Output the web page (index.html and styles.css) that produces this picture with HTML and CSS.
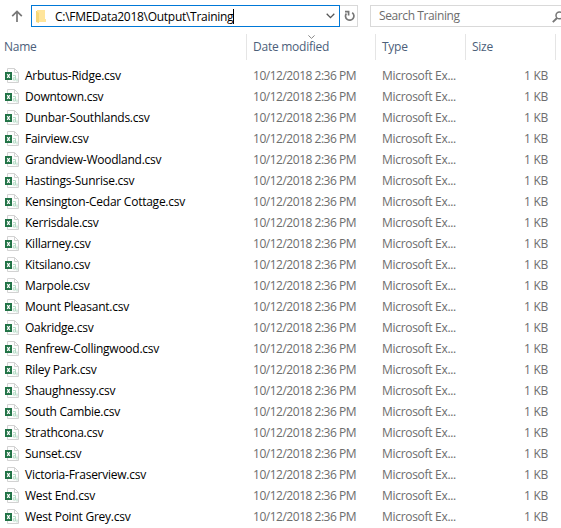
FILE: index.html
```html
<!DOCTYPE html>
<html lang="en">
<head>
<meta charset="utf-8">
<title>Training</title>
<link rel="stylesheet" href="styles.css">
</head>
<body>
<svg class="defs" aria-hidden="true">
  <symbol id="csv" viewBox="0 0 14 16">
    <path d="M2.5.5h7l4 4v10h-11z" fill="#fdfdfd" stroke="#d2d2d2"/>
    <path d="M9.5.5v4h4" fill="none" stroke="#d2d2d2"/>
    <path d="M8 7.5h2.5v4.5H8.3v-2.2h2.2M12 10.5v3" fill="none" stroke="#b5dcc6"/>
    <path d="M0 4h7v8H0z" fill="#217346"/>
    <path d="M2.2 6.2l2.6 3.6M4.8 6.2L2.2 9.8" fill="none" stroke="#fff" stroke-width="1.2"/>
  </symbol>
</svg>
<div class="toolbar">
  <svg class="up" viewBox="0 0 12 12"><path d="M6 12V1.5M1.2 6.2L6 1.4l4.8 4.8" fill="none" stroke="#777" stroke-width="1.7"/></svg>
  <div class="address">
    <svg class="folder" viewBox="0 0 10 13"><path d="M0 1h5v11H0z" fill="#f3cf69"/><path d="M1 0h8v9h1v3H1z" fill="#ffe59b"/><path d="M0 1l3 2v10l-3-1z" fill="#f7d778"/></svg>
    <span class="path">C:\FMEData2018\Output\Training</span><i class="caret"></i>
    <svg class="chevron" viewBox="0 0 9 6"><path d="M.7.8l3.8 3.8L8.3.8" fill="none" stroke="#555" stroke-width="1.3"/></svg>
  </div>
  <div class="refresh"><svg viewBox="0 0 11 12"><path d="M8.2 2.6A4.2 4.2 0 1 1 2.4 3.4M1 1.6h3.6v4" fill="none" stroke="#777" stroke-width="1.7"/></svg></div>
  <div class="search"><span>Search Training</span>
    <svg viewBox="0 0 12 12"><circle cx="7.4" cy="4.4" r="3.4" fill="none" stroke="#777" stroke-width="1.5"/><path d="M5 7L.8 11.2" stroke="#777" stroke-width="1.9"/></svg>
  </div>
</div>
<div class="head">
  <div class="h-name">Name</div>
  <div class="h-date">Date modified<svg class="sort" viewBox="0 0 7 4"><path d="M.4.4l3.1 3L6.6.4" fill="none" stroke="#888"/></svg></div>
  <div class="h-type">Type</div>
  <div class="h-size">Size</div>
</div>
<div class="list">
  <div class="row"><svg><use href="#csv"/></svg><b>Arbutus-Ridge.csv</b><span class="date">10/12/2018 2:36 PM</span><span class="type">Microsoft Ex...</span><span class="size">1 KB</span></div>
  <div class="row"><svg><use href="#csv"/></svg><b>Downtown.csv</b><span class="date">10/12/2018 2:36 PM</span><span class="type">Microsoft Ex...</span><span class="size">1 KB</span></div>
  <div class="row"><svg><use href="#csv"/></svg><b>Dunbar-Southlands.csv</b><span class="date">10/12/2018 2:36 PM</span><span class="type">Microsoft Ex...</span><span class="size">1 KB</span></div>
  <div class="row"><svg><use href="#csv"/></svg><b>Fairview.csv</b><span class="date">10/12/2018 2:36 PM</span><span class="type">Microsoft Ex...</span><span class="size">1 KB</span></div>
  <div class="row"><svg><use href="#csv"/></svg><b>Grandview-Woodland.csv</b><span class="date">10/12/2018 2:36 PM</span><span class="type">Microsoft Ex...</span><span class="size">1 KB</span></div>
  <div class="row"><svg><use href="#csv"/></svg><b>Hastings-Sunrise.csv</b><span class="date">10/12/2018 2:36 PM</span><span class="type">Microsoft Ex...</span><span class="size">1 KB</span></div>
  <div class="row"><svg><use href="#csv"/></svg><b>Kensington-Cedar Cottage.csv</b><span class="date">10/12/2018 2:36 PM</span><span class="type">Microsoft Ex...</span><span class="size">1 KB</span></div>
  <div class="row"><svg><use href="#csv"/></svg><b>Kerrisdale.csv</b><span class="date">10/12/2018 2:36 PM</span><span class="type">Microsoft Ex...</span><span class="size">1 KB</span></div>
  <div class="row"><svg><use href="#csv"/></svg><b>Killarney.csv</b><span class="date">10/12/2018 2:36 PM</span><span class="type">Microsoft Ex...</span><span class="size">1 KB</span></div>
  <div class="row"><svg><use href="#csv"/></svg><b>Kitsilano.csv</b><span class="date">10/12/2018 2:36 PM</span><span class="type">Microsoft Ex...</span><span class="size">1 KB</span></div>
  <div class="row"><svg><use href="#csv"/></svg><b>Marpole.csv</b><span class="date">10/12/2018 2:36 PM</span><span class="type">Microsoft Ex...</span><span class="size">1 KB</span></div>
  <div class="row"><svg><use href="#csv"/></svg><b>Mount Pleasant.csv</b><span class="date">10/12/2018 2:36 PM</span><span class="type">Microsoft Ex...</span><span class="size">1 KB</span></div>
  <div class="row"><svg><use href="#csv"/></svg><b>Oakridge.csv</b><span class="date">10/12/2018 2:36 PM</span><span class="type">Microsoft Ex...</span><span class="size">1 KB</span></div>
  <div class="row"><svg><use href="#csv"/></svg><b>Renfrew-Collingwood.csv</b><span class="date">10/12/2018 2:36 PM</span><span class="type">Microsoft Ex...</span><span class="size">1 KB</span></div>
  <div class="row"><svg><use href="#csv"/></svg><b>Riley Park.csv</b><span class="date">10/12/2018 2:36 PM</span><span class="type">Microsoft Ex...</span><span class="size">1 KB</span></div>
  <div class="row"><svg><use href="#csv"/></svg><b>Shaughnessy.csv</b><span class="date">10/12/2018 2:36 PM</span><span class="type">Microsoft Ex...</span><span class="size">1 KB</span></div>
  <div class="row"><svg><use href="#csv"/></svg><b>South Cambie.csv</b><span class="date">10/12/2018 2:36 PM</span><span class="type">Microsoft Ex...</span><span class="size">1 KB</span></div>
  <div class="row"><svg><use href="#csv"/></svg><b>Strathcona.csv</b><span class="date">10/12/2018 2:36 PM</span><span class="type">Microsoft Ex...</span><span class="size">1 KB</span></div>
  <div class="row"><svg><use href="#csv"/></svg><b>Sunset.csv</b><span class="date">10/12/2018 2:36 PM</span><span class="type">Microsoft Ex...</span><span class="size">1 KB</span></div>
  <div class="row"><svg><use href="#csv"/></svg><b>Victoria-Fraserview.csv</b><span class="date">10/12/2018 2:36 PM</span><span class="type">Microsoft Ex...</span><span class="size">1 KB</span></div>
  <div class="row"><svg><use href="#csv"/></svg><b>West End.csv</b><span class="date">10/12/2018 2:36 PM</span><span class="type">Microsoft Ex...</span><span class="size">1 KB</span></div>
  <div class="row"><svg><use href="#csv"/></svg><b>West Point Grey.csv</b><span class="date">10/12/2018 2:36 PM</span><span class="type">Microsoft Ex...</span><span class="size">1 KB</span></div>
</div>
</body>
</html>
```
FILE: styles.css
```css
* { box-sizing: border-box; }
body {
  margin: 0;
  height: 528px;
  overflow: hidden;
  background: #fff;
  color: #000;
  font: 12px/21px "Open Sans", "Noto Sans", sans-serif;
  letter-spacing: -0.25px;
  white-space: nowrap;
}
svg { display: block; flex: none; }
.defs { width: 0; height: 0; position: absolute; }
.toolbar { display: flex; height: 34px; padding-top: 5px; }
.up { width: 12px; height: 12px; margin: 5px 8px 0 11px; }
.address {
  display: flex;
  flex: none;
  align-items: center;
  width: 309px;
  height: 22px;
  padding: 0 4px;
  border: 1px solid #0078d7;
}
.folder { width: 10px; height: 13px; margin-right: 9px; }
.path { letter-spacing: -0.28px; }
.caret { width: 1px; height: 15px; background: #000; }
.chevron { width: 9px; height: 6px; margin-left: auto; }
.refresh {
  flex: none;
  width: 18px;
  height: 22px;
  padding: 4px 0 0 4px;
  border: 1px solid #d9d9d9;
  border-left: 0;
}
.refresh svg { width: 11px; height: 12px; }
.search {
  display: flex;
  flex: none;
  justify-content: space-between;
  width: 200px;
  height: 22px;
  margin-left: 12px;
  padding-left: 8px;
  border: 1px solid #d9d9d9;
  color: #6d6d6d;
  line-height: 20px;
  letter-spacing: -0.4px;
}
.search svg { width: 12px; height: 12px; margin: 5px 5px 0 0; }
.head {
  display: grid;
  grid-template-columns: 247px 129px 90px 90px;
  height: 25px;
  color: #4c607a;
  line-height: 26px;
}
.head div { position: relative; border-right: 1px solid #e5e5e5; }
.h-name { padding-left: 4px; }
.h-date, .h-type, .h-size { padding-left: 6px; }
.sort { position: absolute; left: 61px; top: 1px; width: 7px; height: 4px; }
.list { padding-top: 6px; }
.row {
  display: grid;
  grid-template-columns: 20px 228px 129px 90px 76px;
  height: 21px;
  padding-left: 5px;
  color: #6d6d6d;
}
.row svg { width: 14px; height: 16px; margin-top: 3px; }
.row b { font-weight: 400; color: #000; }
.date { letter-spacing: -0.48px; }
.type { letter-spacing: -0.3px; }
.size { text-align: right; }
```
